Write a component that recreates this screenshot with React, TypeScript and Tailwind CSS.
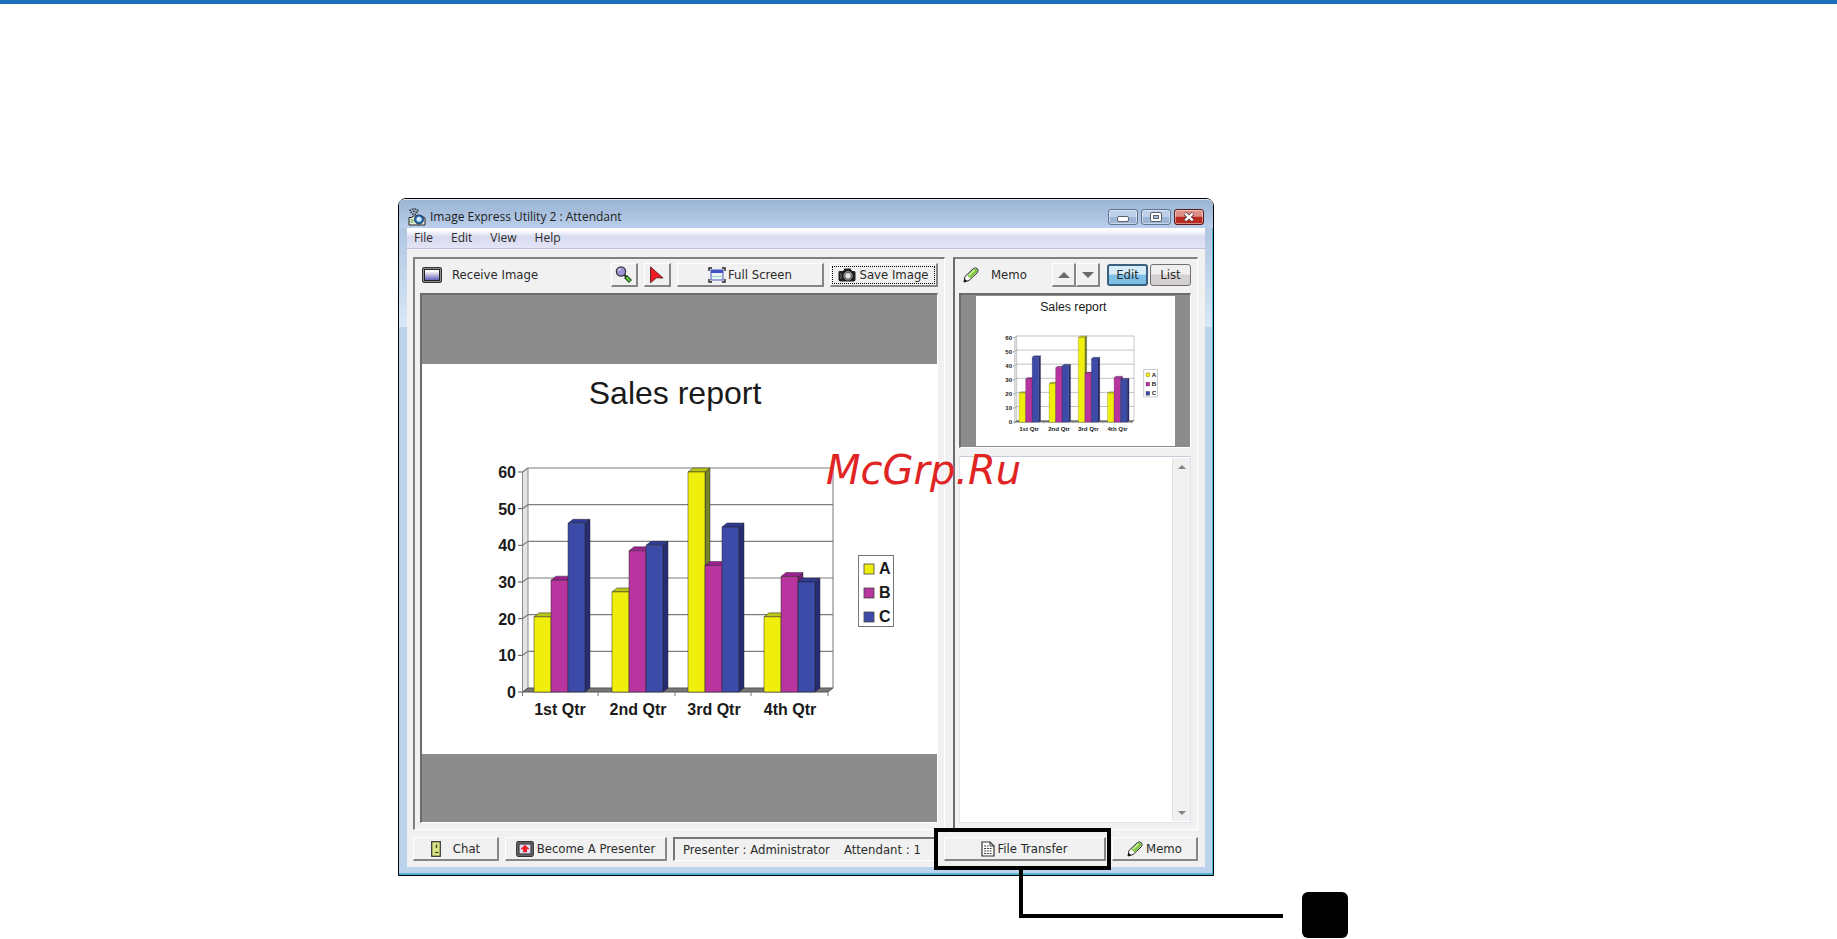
import type { ReactNode } from 'react'
import clsx from 'clsx'

const series = [
  { name: 'A', front: '#f0ee0c', top: '#b9c41a', side: '#78822a' },
  { name: 'B', front: '#b8349f', top: '#9c2290', side: '#6f1d70' },
  { name: 'C', front: '#3c4ba8', top: '#2f3a94', side: '#282c72' },
]

const quarters = [
  { label: '1st Qtr', x: 112, values: [20.5, 30.5, 46] },
  { label: '2nd Qtr', x: 190, values: [27.3, 38.5, 40] },
  { label: '3rd Qtr', x: 266, values: [60, 34.5, 45] },
  { label: '4th Qtr', x: 342, values: [20.5, 31.5, 30] },
]

const BASE = 328
const UNIT = 3.667
const BAR = 17

function SalesSlide({ className }: { className?: string }) {
  const ticks = [0, 10, 20, 30, 40, 50, 60]
  return (
    <svg viewBox="0 0 515 390" className={clsx('block bg-white font-["Liberation_Sans",sans-serif]', className)} role="img" aria-label="Sales report">
      <text x="253" y="40" textAnchor="middle" fontSize="32" fill="#1a1a1a">Sales report</text>
      {/* walls and floor */}
      <path d="M100.5 108 L106 104 V324 L100.5 328 Z" fill="#e4e4e4" stroke="#8a8a8a" />
      <path d="M100.5 328 L106 324 H411 L406 328 Z" fill="#777" stroke="#555" />
      {ticks.map((t) => {
        const y = BASE - t * UNIT
        return (
          <g key={t}>
            {t > 0 && <path d={`M100.5 ${y} L106 ${y - 4} H411`} fill="none" stroke="#7d7d7d" strokeWidth="1.2" />}
            <path d={`M96 ${y} H100.5`} stroke="#555" />
            <text x="94" y={y + 6} textAnchor="end" fontSize="16" fontWeight="bold" fill="#1a1a1a">{t}</text>
          </g>
        )
      })}
      <path d="M411 104 V324" stroke="#777" />
      <path d="M100.5 328 V332 M176 328 V332 M253 328 V332 M329 328 V332 M406 328 V332" stroke="#777" />
      {quarters.map((q) => (
        <g key={q.label}>
          {q.values.map((v, i) => {
            const x = q.x + i * BAR
            const y = BASE - v * UNIT
            const s = series[i]
            return (
              <g key={s.name} stroke="#222" strokeOpacity="0.6" strokeWidth="0.8" strokeLinejoin="round">
                <path d={`M${x + BAR} ${y} l5 -4 V${BASE - 4} l-5 4 Z`} fill={s.side} />
                <path d={`M${x} ${y} l5 -4 h${BAR} l-5 4 Z`} fill={s.top} />
                <rect x={x} y={y} width={BAR} height={BASE - y} fill={s.front} />
              </g>
            )
          })}
          <text x={q.x + 26} y="351" textAnchor="middle" fontSize="16" fontWeight="bold" fill="#1a1a1a">{q.label}</text>
        </g>
      ))}
      <rect x="436.5" y="191.5" width="35" height="71" fill="#fff" stroke="#777" />
      {series.map((s, i) => (
        <g key={s.name}>
          <rect x="442" y={200 + i * 24} width="10" height="10" fill={s.front} stroke="#444" strokeWidth="0.8" />
          <text x="457" y={210 + i * 24} fontSize="16" fontWeight="bold" fill="#1a1a1a">{s.name}</text>
        </g>
      ))}
    </svg>
  )
}

function AppIcon() {
  return (
    <svg viewBox="0 0 18 18" className="size-[18px]" aria-hidden="true">
      <path d="M1.5 2.8 q4.5 -4 9 0 M2.5 4.8 q3.5 -3 7 0 M4 6.6 q2 -1.6 4 0" fill="none" stroke="#222" strokeWidth="1.1" strokeDasharray="2 0.8" />
      <path d="M1 9.5 h3 l1 -1.5 h9 l3 2 v7 H1 Z" fill="#e8eedc" stroke="#222" />
      <path d="M2.5 12 h3 M2.5 14 h3" stroke="#4a9a3c" strokeWidth="1.2" />
      <circle cx="11" cy="11.5" r="4.5" fill="#2e6fb4" stroke="#1b3558" />
      <circle cx="11" cy="11.3" r="2.5" fill="#cdeaf8" />
    </svg>
  )
}

function MonitorIcon() {
  return (
    <svg viewBox="0 0 20 16" className="h-4 w-5" aria-hidden="true">
      <defs>
        <linearGradient id="screen" x1="0" y1="0" x2="0" y2="1">
          <stop offset="0.15" stopColor="#fff" />
          <stop offset="1" stopColor="#5d58b4" />
        </linearGradient>
      </defs>
      <rect x="0.5" y="0.5" width="19" height="15" rx="1.5" fill="#8c8c94" stroke="#333" />
      <rect x="2.5" y="2.5" width="15" height="11" fill="url(#screen)" stroke="#222" />
    </svg>
  )
}

function MagnifierIcon() {
  return (
    <svg viewBox="0 0 18 18" className="size-[18px]" aria-hidden="true">
      <path d="M9.5 9 L12 11.5" stroke="#222" strokeWidth="2" />
      <path d="M10.5 10.5 L15.5 15.5" stroke="#1c3a16" strokeWidth="4" />
      <path d="M11.3 11.3 L15 15" stroke="#62d43c" strokeWidth="2" />
      <circle cx="6" cy="5.5" r="4.6" fill="#9c93d8" stroke="#333" strokeWidth="1.3" />
      <path d="M3.4 5 a3 3 0 0 1 2.4 -2.2" fill="none" stroke="#dcd8f6" strokeWidth="1.3" />
    </svg>
  )
}

function PointerIcon() {
  return (
    <svg viewBox="0 0 16 18" className="h-[18px] w-4" aria-hidden="true">
      <path d="M1.5 0.8 L14 12 L7.5 11.8 L1.5 16.8 Z" fill="#ee1c25" stroke="#4a1014" strokeWidth="0.8" />
    </svg>
  )
}

function FullScreenIcon() {
  return (
    <svg viewBox="0 0 18 16" className="h-4 w-[18px]" aria-hidden="true">
      <path d="M1 4 V1 H4 M14 1 H17 V4 M17 12 V15 H14 M4 15 H1 V12" fill="none" stroke="#222" strokeWidth="1.4" />
      <rect x="3" y="3" width="12" height="10" fill="#e9f6f4" stroke="#4a58b8" />
      <rect x="3" y="3" width="12" height="3" fill="#4453c4" />
      <path d="M4 9.5 H14" stroke="#9fd8c4" />
    </svg>
  )
}

function CameraIcon() {
  return (
    <svg viewBox="0 0 18 14" className="h-3.5 w-[18px]" aria-hidden="true">
      <path d="M1 3 h4 l1.5 -2.5 h6 L14 3 h2 q1.5 0 1.5 1.5 v7 q0 2 -2 2 h-13 q-2 0 -2 -2 V5 q0 -2 1 -2 Z" fill="#1d1d1d" />
      <path d="M3 5 v6" stroke="#777" />
      <circle cx="10" cy="7.8" r="4.2" fill="#555" stroke="#999" />
      <circle cx="10" cy="7.8" r="2.8" fill="#e4e4e4" />
    </svg>
  )
}

function PencilIcon() {
  return (
    <svg viewBox="0 0 16 16" className="size-4" aria-hidden="true">
      <path d="M1 15 L2 9.5 L10.5 1.5 Q13 0 14.6 2 Q16 4 14 6 L6 13.5 Z" fill="#fff" stroke="#222" strokeLinejoin="round" />
      <path d="M4.3 8.2 L10.8 2.2 Q13 1 14 2.6 Q15 4 13.4 5.6 L7.6 11.4 Z" fill="#7cc63c" />
      <path d="M6 8.2 L11.5 3.2" stroke="#d4f09c" strokeWidth="1.5" />
      <path d="M0.8 15.2 L1.6 11.8 L4.4 14.2 Z" fill="#111" />
    </svg>
  )
}

function ChatIcon() {
  return (
    <svg viewBox="0 0 10 16" className="h-4 w-2.5" aria-hidden="true">
      <rect x="0.7" y="0.7" width="8.6" height="14.6" fill="#d9e37f" stroke="#333" strokeWidth="1.2" />
      <path d="M5.5 3.5 V7 M4 11.5 H7.5" fill="none" stroke="#333" strokeWidth="1.2" />
    </svg>
  )
}

function PresenterIcon() {
  return (
    <svg viewBox="0 0 18 16" className="h-4 w-[18px]" aria-hidden="true">
      <rect x="0.7" y="0.7" width="16.6" height="14.6" rx="1.5" fill="#777" stroke="#333" strokeWidth="1.2" />
      <rect x="3" y="3" width="12" height="10" fill="#dcdcf4" stroke="#222" />
      <path d="M9 3.8 L13.6 8.3 H11 V11.2 H7 V8.3 H4.4 Z" fill="#ee1c25" />
    </svg>
  )
}

function FileIcon() {
  return (
    <svg viewBox="0 0 14 16" className="h-4 w-3.5" aria-hidden="true">
      <path d="M1 1 H9 L13 5 V15 H1 Z" fill="#fff" stroke="#333" strokeWidth="1.2" />
      <path d="M9 1 V5 H13" fill="none" stroke="#333" />
      <path d="M3 5 H7.5 M3 7.5 H11 M3 10 H11 M3 12.5 H11" stroke="#444" strokeDasharray="2 0.8" />
    </svg>
  )
}

function Triangle({ down, className }: { down?: boolean; className: string }) {
  return (
    <svg viewBox="0 0 12 6" className={className} aria-hidden="true">
      <path d={down ? 'M0 0 H12 L6 6 Z' : 'M0 6 H12 L6 0 Z'} fill="currentColor" />
    </svg>
  )
}

function RaisedButton({ className, label, children }: { className: string; label?: string; children: ReactNode }) {
  return (
    <button
      type="button"
      aria-label={label}
      className={clsx(
        'flex h-6 shrink-0 items-center justify-center border-t border-l border-r-2 border-b-2 border-t-white border-l-white border-r-[#868686] border-b-[#868686] bg-[#f1f1f1] whitespace-nowrap',
        className,
      )}
    >
      {children}
    </button>
  )
}

const captionButton =
  'flex h-4 w-[30px] items-center justify-center rounded-[3px] border shadow-[inset_0_0_0_1px_rgba(255,255,255,0.45)]'

function TitleBar() {
  return (
    <header className="flex h-[29px] items-center rounded-t-md border-t border-[#dfeaf6] bg-linear-to-b from-[#99b4d3] to-[#bbcfeb] pt-1.5 pr-[9px] pl-[9px]">
      <AppIcon />
      <h1 className="ml-1 flex-1 font-['Open_Sans',sans-serif] text-[12px] leading-4 text-[#1c1c1c]">
        Image Express Utility 2 : Attendant
      </h1>
      <div className="flex gap-[3px]">
        <button type="button" aria-label="Minimize" className={clsx(captionButton, 'border-[#5f7593] bg-linear-to-b from-[#bdd0e8] from-50% to-[#9db6d6] to-50%')}>
          <span className="mt-1 h-1.5 w-3 rounded-xs border border-[#59616f] bg-white" />
        </button>
        <button type="button" aria-label="Maximize" className={clsx(captionButton, 'border-[#5f7593] bg-linear-to-b from-[#bdd0e8] from-50% to-[#9db6d6] to-50%')}>
          <span className="flex h-2.5 w-3 items-center justify-center rounded-xs border border-[#59616f] bg-white">
            <span className="h-1 w-1.5 border border-[#59616f] bg-[#a9bfdc]" />
          </span>
        </button>
        <button type="button" aria-label="Close" className={clsx(captionButton, 'border-[#5a1a18] bg-linear-to-b from-[#dd8f85] from-45% to-[#b92b20] to-50%')}>
          <svg viewBox="0 0 12 10" className="h-2.5 w-3" aria-hidden="true">
            <path d="M2 1.5 L10 8.5 M10 1.5 L2 8.5" stroke="#59333c" strokeWidth="4" />
            <path d="M2.3 1.7 L9.7 8.3 M9.7 1.7 L2.3 8.3" stroke="#fff" strokeWidth="2.4" />
          </svg>
        </button>
      </div>
    </header>
  )
}

function ReceivePanel() {
  return (
    <section className="flex min-w-0 flex-1 flex-col border-t-2 border-r border-b border-l-2 border-t-[#808080] border-r-white border-b-white border-l-[#808080] pr-1.5 pb-1.5 pl-[5px]">
      <div className="flex h-[34px] items-start pt-1">
        <div className="flex h-6 flex-1 items-center pl-0.5">
          <MonitorIcon />
          <h2 className="ml-2.5">Receive Image</h2>
        </div>
        <RaisedButton className="w-[27px]" label="Zoom"><MagnifierIcon /></RaisedButton>
        <RaisedButton className="ml-1.5 w-[27px]" label="Pointer"><PointerIcon /></RaisedButton>
        <RaisedButton className="ml-1.5 w-[147px] gap-0.5"><FullScreenIcon />Full Screen</RaisedButton>
        <RaisedButton className="ml-1.5 w-[108px] p-px">
          <span className="flex h-[18px] flex-1 items-center justify-center gap-[3px] border border-dotted border-black"><CameraIcon />Save Image</span>
        </RaisedButton>
      </div>
      <div className="flex h-[530px] flex-col justify-center border-t-2 border-r border-b border-l-2 border-t-[#6c6c6c] border-r-white border-b-white border-l-[#6c6c6c] bg-[#8b8c8b]">
        <SalesSlide className="w-full" />
      </div>
    </section>
  )
}

function MemoPanel() {
  return (
    <section className="flex w-[245px] shrink-0 flex-col border-t-2 border-r border-b border-l-2 border-t-[#808080] border-r-white border-b-white border-l-[#6c6c6c] pr-1.5 pb-1.5 pl-1">
      <div className="flex h-[34px] items-start pt-1">
        <div className="flex h-6 flex-1 items-center pl-1">
          <PencilIcon />
          <h2 className="ml-3">Memo</h2>
        </div>
        <RaisedButton className="w-6" label="Previous memo"><Triangle className="h-1.5 w-3 text-[#6c6c6c]" /></RaisedButton>
        <RaisedButton className="w-6" label="Next memo"><Triangle down className="h-1.5 w-3 text-[#6c6c6c]" /></RaisedButton>
        <div className="flex gap-0.5 pt-px pl-[7px]">
          <button type="button" className="h-[22px] w-[41px] rounded-[3px] border-2 border-[#3a5f7c] bg-linear-to-b from-[#d6edf9] from-45% to-[#7dbfe6] to-50% leading-4">Edit</button>
          <button type="button" className="h-[22px] w-[41px] rounded-[3px] border border-[#707070] bg-linear-to-b from-[#efefef] from-45% to-[#d4d0cf] to-50% leading-4">List</button>
        </div>
      </div>
      <div className="flex h-[155px] justify-center border-t-2 border-r border-b border-l-2 border-t-[#6c6c6c] border-r-white border-b-white border-l-[#6c6c6c] bg-[#8b8c8b] py-px">
        <SalesSlide className="h-full" />
      </div>
      <div className="mt-2 flex flex-1 border border-[#dfe3ec] border-t-[#c8ccd8] bg-white">
        <textarea aria-label="Memo text" className="min-w-0 flex-1 resize-none bg-white p-1 outline-none" />
        <div className="my-px flex w-[18px] flex-col items-center justify-between border-l border-[#e2e2e2] bg-[#f0f0f0] pt-[7px] pb-1.5">
          <Triangle className="h-1 w-2 text-[#858585]" />
          <Triangle down className="h-1 w-2 text-[#858585]" />
        </div>
      </div>
    </section>
  )
}

function StatusBar() {
  return (
    <footer className="mt-[7px] flex h-6 gap-1.5">
      <RaisedButton className="w-[86px] gap-3"><ChatIcon />Chat</RaisedButton>
      <RaisedButton className="w-[162px] gap-[3px]"><PresenterIcon />Become A Presenter</RaisedButton>
      <p className="flex min-w-0 flex-1 items-center gap-3.5 overflow-hidden border-t-2 border-r border-b border-l-2 border-t-[#777] border-r-white border-b-white border-l-[#777] pl-2 whitespace-nowrap">
        <span>Presenter : Administrator</span>
        <span>Attendant : 1</span>
      </p>
      <div className="relative">
        <RaisedButton className="w-[162px] gap-0.5"><FileIcon />File Transfer</RaisedButton>
        {/* callout frame with its leader line and marker */}
        <div className="pointer-events-none absolute -top-[9px] -right-[5px] -bottom-[9px] -left-2.5 border-4 border-black">
          <div className="absolute top-[38px] left-[81px] h-12 w-[264px] border-b-4 border-l-4 border-black" />
          <div className="absolute top-[60px] left-[364px] size-[46px] rounded-md bg-black" />
        </div>
      </div>
      <RaisedButton className="w-[86px] gap-[3px]"><PencilIcon />Memo</RaisedButton>
    </footer>
  )
}

export default function App() {
  return (
    <div className="min-h-screen bg-white font-['DejaVu_Sans_Condensed','DejaVu_Sans',sans-serif] text-[13px] leading-4 text-[#2a2a2a]">
      <div className="h-1 bg-[#1b6fbd]" />
      <main className="grid grid-cols-[398fr_816fr_623fr] pt-[194px]">
        <div className="relative col-start-2 rounded-t-lg border border-black bg-[linear-gradient(to_bottom,#a3bbda,#d9e8f8_128px,#bcd3ee_128px)] shadow-[inset_-1px_-2px_0_#52b4cb]">
          <TitleBar />
          <div className="px-2 pb-2">
            <nav className="flex h-[21px] items-center gap-[18px] border-b border-[#c3c3d6] bg-linear-to-b from-white from-10% via-[#d8dbf0] via-45% to-[#e4e4f6] pl-[7px] font-['Open_Sans',sans-serif] text-[12px]">
              {['File', 'Edit', 'View', 'Help'].map((item) => (
                <button type="button" key={item}>{item}</button>
              ))}
            </nav>
            <div className="bg-[#f1f1f1] pt-2 pr-[7px] pb-1.5 pl-1.5">
              <div className="flex gap-2">
                <ReceivePanel />
                <MemoPanel />
              </div>
              <StatusBar />
            </div>
          </div>
          <p className="pointer-events-none absolute top-[247px] left-[427px] font-['DejaVu_Sans',sans-serif] text-[40px] leading-[48px] text-[#e02424] italic">
            McGrp.Ru
          </p>
        </div>
      </main>
    </div>
  )
}
